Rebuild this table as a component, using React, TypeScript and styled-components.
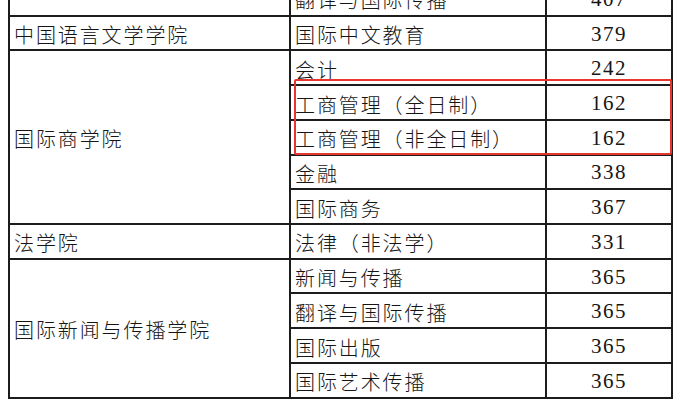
import React from "react";
import styled, { createGlobalStyle } from "styled-components";

const Global = createGlobalStyle`
  html, body { margin: 0; padding: 0; background: #fff; }
  body { font-family: "Noto Sans CJK SC", sans-serif; }
`;

const Page = styled.div`
  width: 687px;
  height: 411px;
  overflow: hidden;
  padding-left: 8px;
  box-sizing: border-box;
  background: #fff;
`;

const Table = styled.div`
  position: relative;
  margin-top: -20px;
  width: 665px;
  box-sizing: border-box;
  display: grid;
  grid-template-columns: 279px 254px 124px;
  grid-auto-rows: 32.73px;
  gap: 2px;
  padding: 2px;
  background: #1c1c1c;
`;

const Cell = styled.div<{ $col: number; $row: number; $span?: number }>`
  grid-column: ${(p) => p.$col};
  grid-row: ${(p) => p.$row} / span ${(p) => p.$span ?? 1};
  background: #fff;
  display: flex;
  align-items: center;
  white-space: nowrap;
  color: #151515;
`;

const TextCell = styled(Cell)`
  justify-content: flex-start;
  padding: 3px 0 0 4px;
  font-family: "Noto Sans CJK SC", sans-serif;
  font-weight: 300;
  font-size: 20px;
  letter-spacing: 1.9px;
`;

const NumCell = styled(Cell)`
  justify-content: center;
  padding: 2px 0 0 0;
  font-family: "Liberation Serif", serif;
  font-size: 21px;
  letter-spacing: 1.5px;
`;

const Highlight = styled.div`
  position: absolute;
  left: 286px;
  top: 99px;
  width: 378px;
  height: 76px;
  box-sizing: border-box;
  border: 2.5px solid #e8362f;
  border-radius: 2px;
  pointer-events: none;
`;

type Group = { school: string; items: [string, string][] };

const groups: Group[] = [
  { school: "", items: [["翻译与国际传播", "407"]] },
  { school: "中国语言文学学院", items: [["国际中文教育", "379"]] },
  {
    school: "国际商学院",
    items: [
      ["会计", "242"],
      ["工商管理（全日制）", "162"],
      ["工商管理（非全日制）", "162"],
      ["金融", "338"],
      ["国际商务", "367"],
    ],
  },
  { school: "法学院", items: [["法律（非法学）", "331"]] },
  {
    school: "国际新闻与传播学院",
    items: [
      ["新闻与传播", "365"],
      ["翻译与国际传播", "365"],
      ["国际出版", "365"],
      ["国际艺术传播", "365"],
    ],
  },
];

export default function App() {
  let row = 1;
  const cells: React.ReactNode[] = [];
  groups.forEach((g, gi) => {
    const start = row;
    cells.push(
      <TextCell key={`s${gi}`} $col={1} $row={start} $span={g.items.length}>
        {g.school}
      </TextCell>
    );
    g.items.forEach(([major, score], ii) => {
      cells.push(
        <TextCell key={`m${gi}-${ii}`} $col={2} $row={row}>
          {major}
        </TextCell>
      );
      cells.push(
        <NumCell key={`n${gi}-${ii}`} $col={3} $row={row}>
          {score}
        </NumCell>
      );
      row += 1;
    });
  });
  return (
    <>
      <Global />
      <Page>
        <Table>
          {cells}
          <Highlight />
        </Table>
      </Page>
    </>
  );
}
